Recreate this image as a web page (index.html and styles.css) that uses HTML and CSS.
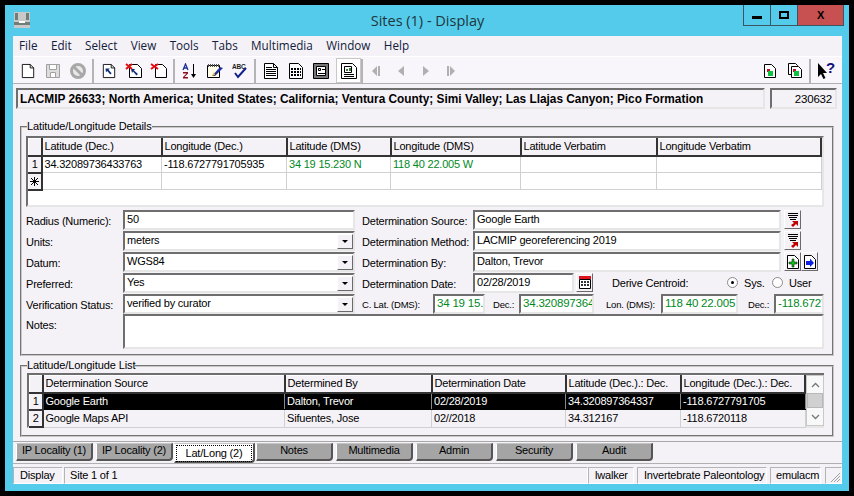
FILE: index.html
```html
<!DOCTYPE html>
<html lang="en">

<head>
    <meta charset="UTF-8">
    <meta name="viewport" content="width=device-width, initial-scale=1.0">
    <title>Sites (1) - Display</title>
    <link rel="stylesheet" href="styles.css">
</head>

<body>
    <svg class="defs" width="0" height="0">
        <symbol id="page" viewBox="0 0 16 18">
            <path d="M1.500 1.500h9l4 4v11h-13z" fill="#fff" stroke="#000" />
            <path d="M10.500 1.500v4h4" fill="none" stroke="#000" />
        </symbol>
        <symbol id="lines" viewBox="0 0 16 18">
            <path d="M1.500 1.500h9l4 4v11h-13z" fill="#fff" stroke="#000" />
            <path d="M10.500 1.500v4h4M3 5.500h6M3 7.500h10M3 9.500h10M3 11.500h10M3 13.500h10" fill="none" stroke="#000" />
        </symbol>
        <symbol id="grid" viewBox="0 0 16 18">
            <path d="M1.500 1.500h9l4 4v11h-13z" fill="#fff" stroke="#000" />
            <path d="M3 6h10v2H3zM3 9h10v2H3zM3 12h10v2H3z" fill="#000" />
            <path d="M5.500 5v10M8.500 5v10M11.500 5v10" stroke="#fff" />
        </symbol>
        <symbol id="form" viewBox="0 0 16 18">
            <path d="M.5 1.500h15v15H.5z" fill="#777" stroke="#000" />
            <path d="M3.500 4.500h9v9h-9z" fill="#fff" stroke="#000" />
            <path d="M5.500 6.500h2v2h-2zM9 7.500h3M5 11.500h7" fill="none" stroke="#000" />
        </symbol>
        <symbol id="chart" viewBox="0 0 16 18">
            <path d="M.5 1.500h11l4 4v11H.5z" fill="#fff" stroke="#000" />
            <path d="M3.500 4.500h7v6h-7z" fill="#fff" stroke="#000" />
            <path d="M5 9V7h2v2zM8 9V6h2v3z" fill="#3a7a3a" />
            <path d="M3 12.500h10M3 14.500h10" stroke="#000" />
        </symbol>
        <symbol id="pick" viewBox="0 0 12 14">
            <path d="M1 .5h10M1 2.500h10M2 4.500h8M3 6.500h6" stroke="#000" fill="none" />
            <path d="M5 8h6v5l-2-2-3 3-2-2 3-2z" fill="#c00000" />
        </symbol>
        <symbol id="step-last" viewBox="0 0 10 12">
            <path d="M1 1v10h2V1zM4 1l5 5-5 5z" />
        </symbol>
    </svg>

    <div class="window">
        <div class="titlebar">
            <svg class="app-icon" width="16" height="16" viewBox="0 0 16 16">
                <path d="M0 0h16v16H0z" fill="#c9c9c9" />
                <path d="M1 1h3v7H1zM12 1h3v7h-3zM0 10h16v3H0z" fill="#6f7f78" />
                <path d="M5 9h6v2H5z" fill="#fff" />
            </svg>
            <div class="title">Sites (1) - Display</div>
            <div class="win-buttons">
                <div class="win-btn min"><span class="min-glyph"></span></div>
                <div class="win-btn max"><span class="max-glyph"></span></div>
                <div class="win-btn close">X</div>
            </div>
        </div>

        <div class="content">
            <div class="menubar">
                <span>File</span><span>Edit</span><span>Select</span><span>View</span><span>Tools</span><span>Tabs</span><span>Multimedia</span><span>Window</span><span>Help</span>
            </div>

            <div class="toolbar">
                <div class="tool"><svg width="14" height="16"><use href="#page" /></svg></div>
                <div class="tool">
                    <svg width="16" height="16" viewBox="0 0 16 16">
                        <path d="M1.500 1.500h13v13h-13z" fill="#ddd" stroke="#a0a0a0" />
                        <path d="M4.500 1.500h7v5h-7zM5.500 9.500h5v5h-5z" fill="#fff" stroke="#a0a0a0" />
                    </svg>
                </div>
                <div class="tool">
                    <svg width="16" height="16" viewBox="0 0 16 16">
                        <circle cx="8" cy="8" r="6.500" fill="#e8e8e8" stroke="#a8a8a8" stroke-width="3" />
                        <path d="M4 4l8 8" stroke="#a8a8a8" stroke-width="3" />
                    </svg>
                </div>
                <div class="sep"></div>
                <div class="tool">
                    <svg width="14" height="16" viewBox="0 0 16 18">
                        <use href="#page" width="16" height="18" />
                        <path d="M4 6h5L7.500 7.500l3.500 4-1.500 1.500-3.500-4L4.500 10.500z" fill="#10307a" />
                    </svg>
                </div>
                <div class="tool">
                    <svg width="18" height="16" viewBox="0 0 18 16">
                        <path d="M4.500 1.500h8l4 4v9h-12z" fill="#fff" stroke="#000" />
                        <path d="M6 6h4L9 7.500l4 3.500-1.500 1.500-3.500-4L7 10z" fill="#10307a" />
                        <path d="M1 1l6 5M7 1L1 6" stroke="#e01010" stroke-width="2" />
                    </svg>
                </div>
                <div class="tool">
                    <svg width="18" height="16" viewBox="0 0 18 16">
                        <path d="M5.500 1.500h7l4 4v9h-11z" fill="#fff" stroke="#000" />
                        <path d="M1 1l7 5M8 1L1 6" stroke="#e01010" stroke-width="2" />
                    </svg>
                </div>
                <div class="sep"></div>
                <div class="tool">
                    <svg width="16" height="16" viewBox="0 0 16 16">
                        <path d="M1 7l2.500-6L6 7M2 5h3" fill="none" stroke="#1f2f9a" stroke-width="1.300" />
                        <path d="M1 9h5v1.500L2.500 14H6v1.500H1V14l3.500-3.500H1z" fill="#8a1020" />
                        <path d="M11.500 1v12" stroke="#000" />
                        <path d="M9 11h5l-2.500 4z" />
                    </svg>
                </div>
                <div class="tool">
                    <svg width="18" height="16" viewBox="0 0 18 16">
                        <path d="M1.500 2.500h12v12h-12z" fill="#fffde8" stroke="#000" />
                        <path d="M2.500 1v3M4.500 1v3M6.500 1v3M8.500 1v3M10.500 1v3M12.500 1v3" stroke="#555" />
                        <path d="M6 13l8-9 3 1-8 8z" fill="#2030a0" />
                        <path d="M6 13l2-4 1 3z" fill="#e8c020" />
                    </svg>
                </div>
                <div class="tool">
                    <svg width="16" height="16" viewBox="0 0 16 16">
                        <text x="0" y="6" class="abc">ABC</text>
                        <path d="M3 10l3 4 8-9" fill="none" stroke="#10208a" stroke-width="2" />
                    </svg>
                </div>
                <div class="sep"></div>
                <div class="tool"><svg width="16" height="18"><use href="#lines" /></svg></div>
                <div class="tool"><svg width="16" height="18"><use href="#grid" /></svg></div>
                <div class="tool"><svg width="16" height="18"><use href="#form" /></svg></div>
                <div class="tool active"><svg width="16" height="18"><use href="#chart" /></svg></div>
                <div class="sep tight"></div>
                <div class="tool nav"><svg width="10" height="12"><use href="#step-last" class="flip" /></svg></div>
                <div class="tool nav">
                    <svg width="8" height="12" viewBox="0 0 8 12"><path d="M7 1v10L1 6z" /></svg>
                </div>
                <div class="tool nav">
                    <svg width="8" height="12" viewBox="0 0 8 12"><path d="M1 1v10l6-5z" /></svg>
                </div>
                <div class="tool nav"><svg width="10" height="12"><use href="#step-last" /></svg></div>
                <div class="spacer"></div>
                <div class="tool">
                    <svg width="12" height="14" viewBox="0 0 12 14">
                        <path d="M.5.500h7l4 4v9H.5z" fill="#fff" stroke="#000" />
                        <path d="M3 5h3v3H3z" fill="#c01030" />
                        <path d="M4 7h5v5H4z" fill="#10c040" />
                    </svg>
                </div>
                <div class="tool">
                    <svg width="14" height="15" viewBox="0 0 14 15">
                        <path d="M.5.500h7l2 2v9H.5z" fill="#fff" stroke="#000" />
                        <path d="M3.500 3.500h7l3 3v8h-10z" fill="#fff" stroke="#000" />
                        <path d="M5 6h3v3H5z" fill="#c01030" />
                        <path d="M6 8h5v5H6z" fill="#10c040" />
                    </svg>
                </div>
                <div class="sep"></div>
                <div class="tool">
                    <svg width="18" height="17" viewBox="0 0 18 17">
                        <path d="M1 1v14l3-3 2.500 5 2-1-2.500-5h4z" />
                        <text x="9" y="11" class="help-q">?</text>
                    </svg>
                </div>
            </div>

            <div class="info-row">
                <div class="summary sunken">LACMIP 26633; North America; United States; California; Ventura County; Simi Valley; Las Llajas Canyon; Pico Formation</div>
                <div class="record-id sunken">230632</div>
            </div>

            <fieldset class="group details">
                <legend>Latitude/Longitude Details</legend>
                <div class="grid-box">
                    <table class="grid">
                        <colgroup>
                            <col class="c-hdr">
                            <col class="d1">
                            <col class="d2">
                            <col class="d3">
                            <col class="d4">
                            <col class="d5">
                            <col>
                        </colgroup>
                        <tr>
                            <th></th>
                            <th>Latitude (Dec.)</th>
                            <th>Longitude (Dec.)</th>
                            <th>Latitude (DMS)</th>
                            <th>Longitude (DMS)</th>
                            <th>Latitude Verbatim</th>
                            <th>Longitude Verbatim</th>
                        </tr>
                        <tr>
                            <th class="num">1</th>
                            <td>34.32089736433763</td>
                            <td>-118.6727791705935</td>
                            <td class="green">34 19 15.230 N</td>
                            <td class="green">118 40 22.005 W</td>
                            <td></td>
                            <td></td>
                        </tr>
                        <tr>
                            <th class="num">
                                <svg class="star" width="9" height="9" viewBox="0 0 9 9"><path d="M4.500 0v9M0 4.500h9M1 1l7 7M8 1L1 8" stroke="#000" /></svg>
                            </th>
                            <td></td>
                            <td></td>
                            <td></td>
                            <td></td>
                            <td></td>
                            <td></td>
                        </tr>
                    </table>
                </div>

                <div class="form">
                    <div class="form-row">
                        <label class="lbl">Radius (Numeric):</label>
                        <div class="field sunken left-field">50</div>
                        <label class="lbl2">Determination Source:</label>
                        <div class="field sunken right-field">Google Earth</div>
                        <div class="btn"><svg width="12" height="14"><use href="#pick" /></svg></div>
                    </div>
                    <div class="form-row">
                        <label class="lbl">Units:</label>
                        <div class="field sunken left-field combo">meters<span class="drop"></span></div>
                        <label class="lbl2">Determination Method:</label>
                        <div class="field sunken right-field">LACMIP georeferencing 2019</div>
                        <div class="btn"><svg width="12" height="14"><use href="#pick" /></svg></div>
                    </div>
                    <div class="form-row">
                        <label class="lbl">Datum:</label>
                        <div class="field sunken left-field combo">WGS84<span class="drop"></span></div>
                        <label class="lbl2">Determination By:</label>
                        <div class="field sunken right-field">Dalton, Trevor</div>
                        <div class="btn">
                            <svg width="12" height="14" viewBox="0 0 12 14">
                                <path d="M.5.500h7l4 4v9H.5z" fill="#fff" stroke="#000" />
                                <path d="M5 4h2v3h3v2H7v3H5V9H2V7h3z" fill="#10c020" stroke="#000" stroke-width=".5" />
                            </svg>
                        </div>
                        <div class="btn">
                            <svg width="12" height="14" viewBox="0 0 12 14">
                                <path d="M.5.500h7l4 4v9H.5z" fill="#fff" stroke="#000" />
                                <path d="M2 6h4V3.500L10 8l-4 4V10H2z" fill="#1020e0" />
                            </svg>
                        </div>
                    </div>
                    <div class="form-row">
                        <label class="lbl">Preferred:</label>
                        <div class="field sunken left-field combo">Yes<span class="drop"></span></div>
                        <label class="lbl2">Determination Date:</label>
                        <div class="field sunken date-field">02/28/2019</div>
                        <div class="btn cal">
                            <svg width="12" height="13" viewBox="0 0 12 13">
                                <path d="M0 0h12v3H0z" fill="#e01020" />
                                <path d="M.5 3.500h11v9H.5z" fill="#fff" stroke="#000" />
                                <path d="M2 5h2v2H2zM5 5h2v2H5zM8 5h2v2H8zM2 8h2v2H2zM5 8h2v2H5zM8 8h2v2H8z" fill="#333" />
                            </svg>
                        </div>
                        <span class="derive">Derive Centroid:</span>
                        <span class="radio on"></span><span class="radio-lbl">Sys.</span>
                        <span class="radio"></span><span class="radio-lbl">User</span>
                    </div>
                    <div class="form-row">
                        <label class="lbl">Verification Status:</label>
                        <div class="field sunken left-field combo">verified by curator<span class="drop"></span></div>
                        <label class="small lat-lbl">C. Lat. (DMS):</label>
                        <div class="field sunken green w-lat">34 19 15.230 N</div>
                        <label class="small dec-lbl">Dec.:</label>
                        <div class="field sunken green w-dec">34.320897364337</div>
                        <label class="small lon-lbl">Lon. (DMS):</label>
                        <div class="field sunken green w-lon">118 40 22.005</div>
                        <label class="small dec2-lbl">Dec.:</label>
                        <div class="field sunken green w-dec2">-118.6727791705</div>
                    </div>
                    <div class="form-row notes-row">
                        <label class="lbl">Notes:</label>
                        <div class="field sunken notes"></div>
                    </div>
                </div>
            </fieldset>

            <fieldset class="group list">
                <legend>Latitude/Longitude List</legend>
                <div class="list-box">
                    <table class="grid list-grid">
                        <colgroup>
                            <col class="c-hdr">
                            <col class="l1">
                            <col class="l2">
                            <col class="l3">
                            <col class="l4">
                            <col>
                        </colgroup>
                        <tr>
                            <th></th>
                            <th>Determination Source</th>
                            <th>Determined By</th>
                            <th>Determination Date</th>
                            <th>Latitude (Dec.).: Dec.</th>
                            <th>Longitude (Dec.).: Dec.</th>
                        </tr>
                        <tr class="selected">
                            <th class="num">1</th>
                            <td>Google Earth</td>
                            <td>Dalton, Trevor</td>
                            <td>02/28/2019</td>
                            <td>34.320897364337</td>
                            <td>-118.6727791705</td>
                        </tr>
                        <tr class="plain">
                            <th class="num">2</th>
                            <td>Google Maps API</td>
                            <td>Sifuentes, Jose</td>
                            <td>02//2018</td>
                            <td>34.312167</td>
                            <td>-118.6720118</td>
                        </tr>
                    </table>
                    <div class="scrollbar">
                        <div class="sb-btn">
                            <svg width="9" height="6" viewBox="0 0 9 6"><path d="M1 5l3.500-3.500L8 5" fill="none" stroke="#777" stroke-width="1.300" /></svg>
                        </div>
                        <div class="sb-thumb"></div>
                        <div class="sb-btn">
                            <svg width="9" height="6" viewBox="0 0 9 6"><path d="M1 1l3.500 3.500L8 1" fill="none" stroke="#777" stroke-width="1.300" /></svg>
                        </div>
                    </div>
                </div>
            </fieldset>

            <div class="tabs">
                <div class="tab">IP Locality (1)</div>
                <div class="tab">IP Locality (2)</div>
                <div class="tab active"><span>Lat/Long (2)</span></div>
                <div class="tab">Notes</div>
                <div class="tab">Multimedia</div>
                <div class="tab">Admin</div>
                <div class="tab">Security</div>
                <div class="tab">Audit</div>
            </div>

            <div class="statusbar">
                <div class="st st-mode">Display</div>
                <div class="st st-site">Site 1 of 1</div>
                <div class="st st-user">lwalker</div>
                <div class="st st-dept">Invertebrate Paleontology</div>
                <div class="st st-login">emulacm</div>
                <div class="st st-grip">
                    <svg width="12" height="12" viewBox="0 0 12 12"><path d="M11 2l-9 9M11 5l-6 6M11 8l-3 3" stroke="#a0a0a0" /></svg>
                </div>
            </div>
        </div>
    </div>
</body>

</html>
```

FILE: styles.css
```css
* {
    box-sizing: border-box;
}

html,
body {
    margin: 0;
    height: 100%;
    background-color: #000000;
    overflow: hidden;
}

body {
    padding: 5px;
    font-family: "Liberation Sans", Arial, sans-serif;
    font-size: 11px;
    letter-spacing: -0.2px;
    color: #000000;
}

.defs {
    display: none;
}

.window {
    height: 486px;
    width: 844px;
    background-color: #54cbea;
    padding: 0 7px 7px 8px;
    display: flex;
    flex-direction: column;
    position: relative;
}

/* Title bar */
.titlebar {
    height: 31px;
    flex: none;
    display: flex;
    align-items: flex-start;
    justify-content: center;
}

.app-icon {
    position: absolute;
    left: 9px;
    top: 7px;
}

.title {
    font-family: "Open Sans", sans-serif;
    font-size: 14.500px;
    letter-spacing: 0;
    line-height: 32px;
    color: #1f3640;
}

.win-buttons {
    position: absolute;
    top: 0;
    right: 5px;
    display: flex;
    height: 21px;
    border: 1px solid #3d5560;
    border-top: 0;
}

.win-btn {
    display: flex;
    align-items: center;
    justify-content: center;
}

.win-btn.min,
.win-btn.max {
    width: 27px;
    border-right: 1px solid #3d5560;
}

.win-btn.close {
    width: 45px;
    background-color: #c75050;
    font-weight: bold;
    font-size: 11px;
}

.min-glyph {
    width: 10px;
    height: 3px;
    margin-top: 5px;
    background-color: #000000;
}

.max-glyph {
    width: 10px;
    height: 8px;
    border: 2px solid #000000;
}

/* Main client area */
.content {
    flex: 1;
    background-color: #f5f2f7;
    display: flex;
    flex-direction: column;
}

.menubar {
    height: 20px;
    flex: none;
    display: flex;
    align-items: center;
    padding: 0 0 2px 6px;
    font-family: "Open Sans", sans-serif;
    font-size: 11.700px;
    letter-spacing: 0;
    color: #10203a;
}

.menubar span {
    margin-right: 13.400px;
}

.toolbar {
    height: 28px;
    flex: none;
    display: flex;
    align-items: center;
    padding: 1px 4px 0 2px;
    background-color: #f8f6fa;
    border-top: 1px solid #ffffff;
    border-bottom: 1px solid #b0b0b0;
}

.tool {
    width: 25px;
    height: 25px;
    display: flex;
    align-items: center;
    justify-content: center;
}

.tool.active {
    border: 1px solid #c8c8c8;
    background-color: #ffffff;
    margin-left: 3px;
}

.tool.nav svg {
    fill: #b0b0b0;
}

.flip {
    transform: scaleX(-1);
    transform-origin: 5px 6px;
}

.sep {
    width: 2px;
    height: 24px;
    margin: 0 2px;
    background-color: #b4b4b4;
}

.sep.tight {
    margin: 0;
}

.spacer {
    flex: 1;
}

.abc {
    font-size: 6.500px;
    font-weight: bold;
    fill: #222222;
}

.help-q {
    font-size: 15px;
    font-weight: bold;
    fill: #10107a;
}

.sunken {
    background-color: #ffffff;
    border: 2px solid;
    border-color: #6e6e6e #e6e6e6 #e6e6e6 #6e6e6e;
}

.info-row {
    display: flex;
    height: 21px;
    margin: 4px 5px 0 3px;
    flex: none;
    gap: 5px;
}

.summary {
    width: 749px;
    background-color: #f5f2f7;
    font-weight: bold;
    line-height: 18px;
    padding-left: 2px;
    font-size: 11.850px;
    letter-spacing: 0;
    white-space: nowrap;
}

.record-id {
    flex: 1;
    background-color: #f5f2f7;
    text-align: right;
    line-height: 18px;
    padding-right: 3px;
    font-size: 11.500px;
}

/* Group boxes */
.group {
    margin: 0 8px 0 7px;
    padding: 0;
    border: 2px groove #c8c8c8;
    min-width: 0;
}

.group legend {
    padding: 0;
    margin-left: 1px;
    line-height: 13px;
    font-size: 11px;
    letter-spacing: -0.1px;
}

.details {
    height: 236px;
    margin-top: 11px;
    padding: 3px 8px 0 4px;
}

.list {
    height: 78px;
    margin-top: 3px;
    padding: 1px 8px 0 5px;
}

.list legend {
    margin-left: 0;
}

/* Grids */
.grid-box {
    height: 71px;
    border: 2px solid;
    border-color: #6e6e6e #e6e6e6 #e6e6e6 #6e6e6e;
    background-color: #ffffff;
}

.grid {
    width: 100%;
    border-collapse: collapse;
    table-layout: fixed;
    background-color: #ffffff;
}

.grid th,
.grid td {
    height: 17px;
    padding: 0 2px;
    text-align: left;
    font-weight: normal;
    white-space: nowrap;
    overflow: hidden;
    line-height: 15px;
}

.grid th {
    background-color: #f5f2f7;
    border-top: 1px solid #ffffff;
    border-left: 1px solid #ffffff;
    border-right: 2px solid #333333;
    border-bottom: 2px solid #333333;
}

.grid td {
    border-right: 1px solid #d0d0d0;
    border-bottom: 1px solid #d0d0d0;
}

.grid .num {
    text-align: center;
    padding: 0;
}

.star {
    display: block;
    margin: 0 auto;
}

.c-hdr {
    width: 13px;
}

.d1 {
    width: 120px;
}

.d2 {
    width: 125px;
}

.d3 {
    width: 104px;
}

.d4 {
    width: 130px;
}

.d5 {
    width: 136px;
}

.green {
    color: #008a1e;
}

/* Form rows */
.form {
    margin-top: 2px;
}

.form-row {
    display: flex;
    align-items: center;
    height: 21px;
}

.lbl {
    width: 97px;
    flex: none;
    padding-top: 2px;
    white-space: nowrap;
}

.lbl2 {
    width: 111px;
    flex: none;
    margin-left: 7px;
    padding-top: 2px;
    white-space: nowrap;
}

.field {
    height: 20px;
    line-height: 15px;
    padding-left: 2px;
    flex: none;
    white-space: nowrap;
    overflow: hidden;
    position: relative;
}

.left-field {
    width: 232px;
}

.right-field {
    width: 308px;
}

.date-field {
    width: 101px;
}

.btn {
    width: 17px;
    height: 19px;
    margin-left: 3px;
    flex: none;
    display: flex;
    align-items: center;
    justify-content: center;
    background-color: #f5f2f7;
    border: 1px solid;
    border-color: #ffffff #6a6a6a #6a6a6a #ffffff;
}

.btn + .btn {
    margin-left: 0;
}

.btn.cal {
    margin-left: 2px;
}

.derive {
    margin-left: 19px;
    width: 115px;
    flex: none;
}

.radio {
    width: 11px;
    height: 11px;
    border-radius: 50%;
    background-color: #ffffff;
    border: 1px solid #8a8a8a;
    margin-right: 6px;
    flex: none;
    position: relative;
}

.radio.on::after {
    content: "";
    position: absolute;
    left: 3px;
    top: 3px;
    width: 3px;
    height: 3px;
    background-color: #000000;
    border-radius: 50%;
}

.radio-lbl {
    width: 28px;
    flex: none;
}

.drop {
    position: absolute;
    top: 1px;
    right: 0;
    width: 16px;
    height: 15px;
    background-color: #f5f2f7;
    border: 1px solid;
    border-color: #ffffff #6a6a6a #6a6a6a #ffffff;
}

.drop::after {
    content: "";
    position: absolute;
    left: 4px;
    top: 5px;
    border-left: 3px solid transparent;
    border-right: 3px solid transparent;
    border-top: 3px solid #000000;
}

.small {
    font-size: 9.500px;
    flex: none;
    padding-top: 2px;
    white-space: nowrap;
}

.lat-lbl {
    margin-left: 7px;
    width: 71px;
}

.dec-lbl {
    margin-left: 8px;
    width: 26px;
}

.lon-lbl {
    margin-left: 12px;
    width: 55px;
}

.dec2-lbl {
    margin-left: 10px;
    width: 26px;
}

.field.green {
    font-size: 11.500px;
}

.w-lat {
    width: 52px;
}

.w-dec {
    width: 75px;
}

.w-lon {
    width: 77px;
}

.w-dec2 {
    width: 50px;
}

.notes-row {
    align-items: flex-start;
    height: 35px;
}

.notes-row .lbl {
    padding-top: 5px;
}

.notes {
    flex: 1;
    height: 35px;
}

/* List */
.list-box {
    display: flex;
    height: 55px;
    border: 2px solid;
    border-right: 0;
    border-color: #6e6e6e #e6e6e6 #e6e6e6 #6e6e6e;
    background-color: #f5f2f7;
}

.list-grid {
    flex: 1;
    width: auto;
    height: 53px;
    background-color: #f5f2f7;
}

.l1 {
    width: 242px;
}

.l2 {
    width: 147px;
}

.l3 {
    width: 134px;
}

.l4 {
    width: 115px;
}

.selected td {
    background-color: #000000;
    color: #ffffff;
    border-color: #000000;
    border-right-color: #888888;
}

.scrollbar {
    width: 18px;
    flex: none;
    display: flex;
    flex-direction: column;
    background-color: #e8e8e8;
    border: 1px solid #c8c8c8;
}

.sb-btn {
    height: 17px;
    display: flex;
    align-items: center;
    justify-content: center;
    background-color: #f8f8f8;
}

.sb-thumb {
    flex: 1;
    background-color: #d0d0d0;
    border: 1px solid #b8b8b8;
}

/* Tabs */
.tabs {
    display: flex;
    height: 23px;
    margin-top: 4px;
    padding: 1px 0 0 3px;
    gap: 3px;
    flex: none;
    border-top: 1px solid #a8a8a8;
    border-bottom: 1px solid #b0b0b0;
    align-items: flex-start;
}

.tab {
    width: 77px;
    height: 18px;
    line-height: 13px;
    text-align: center;
    background-color: #a5a5a5;
    border-top: 1px solid #c4c4c4;
    border-left: 1px solid #ffffff;
    border-right: 2px solid #555555;
    border-bottom: 2px solid #555555;
    border-bottom-right-radius: 4px;
}

.tab.active {
    width: 81px;
    height: 20px;
    margin: 0 -2px;
    background-color: #ffffff;
    line-height: 15px;
    padding: 1px;
}

.tab.active span {
    display: block;
    border: 1px dotted #000000;
}

/* Status bar */
.statusbar {
    display: flex;
    flex: 1;
    padding-top: 3px;
}

.st {
    border: 1px solid;
    border-color: #b4b4b4 #ffffff #ffffff #b4b4b4;
    line-height: 15px;
    padding-left: 6px;
    white-space: nowrap;
    height: 100%;
}

.st-mode {
    width: 50px;
    margin-right: 1px;
}

.st-site {
    width: 524px;
    padding-left: 5px;
}

.st-user {
    width: 46px;
    margin-right: 3px;
}

.st-dept {
    width: 130px;
    margin-right: 3px;
}

.st-login {
    width: 51px;
    margin-right: 4px;
    padding-left: 5px;
}

.st-grip {
    flex: 1;
    display: flex;
    justify-content: flex-end;
    align-items: flex-end;
    padding: 0;
}
```
